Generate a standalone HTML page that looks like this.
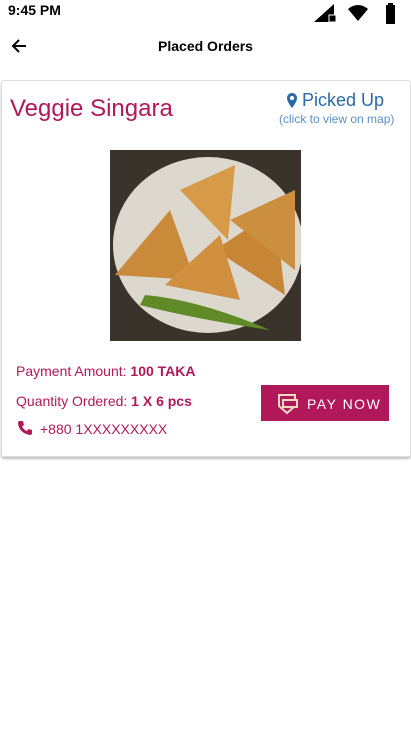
<!DOCTYPE html>
<html><head><style>
body{margin:0;width:411px;height:731px;background:#fff;font-family:"Liberation Sans",sans-serif;position:relative;overflow:hidden}
.a{position:absolute}
.card{left:1px;top:80px;width:408px;height:375px;border:1px solid #ddd;border-radius:3px;box-shadow:0 2px 2px rgba(0,0,0,.25)}
.m{color:#b0185a}
</style></head><body>
<div class="a" style="left:8px;top:2px;font-size:14px;font-weight:bold">9:45 PM</div>
<svg class="a" style="left:312px;top:2px" width="90" height="22">
<path d="M2 20 L22 2 V20Z" fill="#000"/><rect x="17" y="13" width="7" height="7" fill="#000" stroke="#fff"/>
<path d="M36 7 Q46 -1 56 7 L46 19Z" fill="#000"/>
<rect x="74" y="3" width="9" height="19" fill="#000"/><rect x="76" y="1" width="5" height="3" fill="#000"/>
</svg>
<svg class="a" style="left:10px;top:37px" width="18" height="18"><path d="M16 9H3M9 3L3 9L9 15" stroke="#000" stroke-width="2" fill="none"/></svg>
<div class="a" style="left:0;width:411px;top:38px;text-align:center;font-size:14px;font-weight:bold">Placed Orders</div>
<div class="a card"></div>
<div class="a m" style="left:10px;top:95px;font-size:24px">Veggie Singara</div>
<svg class="a" style="left:286px;top:92px" width="12" height="18"><path d="M6 1C3 1 1 3.5 1 6C1 10 6 16 6 16C6 16 11 10 11 6C11 3.5 9 1 6 1Z" fill="#2a6aa8"/><circle cx="6" cy="6" r="2" fill="#fff"/></svg>
<div class="a" style="left:302px;top:90px;font-size:18px;color:#2a6aa8">Picked Up</div>
<div class="a" style="left:279px;top:112px;font-size:12px;color:#5b8fc4">(click to view on map)</div>
<svg class="a" style="left:110px;top:150px" width="191" height="191">
<rect width="191" height="191" fill="#3a332c"/>
<ellipse cx="98" cy="95" rx="95" ry="88" fill="#ddd8ce"/>
<path d="M5 125 L60 60 L85 130 Z" fill="#c98a3a"/>
<path d="M70 40 L125 15 L118 90 Z" fill="#d69a48"/>
<path d="M105 100 L165 60 L175 145 Z" fill="#c78636"/>
<path d="M55 135 L110 85 L130 150 Z" fill="#d09040"/>
<path d="M120 70 L185 40 L185 120 Z" fill="#cc8f3f"/>
<path d="M35 145 Q90 150 160 180 Q90 170 30 155Z" fill="#5f8a25"/>
</svg>
<div class="a m" style="left:16px;top:363px;font-size:14px">Payment Amount: <b>100 TAKA</b></div>
<div class="a m" style="left:16px;top:393px;font-size:14px">Quantity Ordered: <b>1 X 6 pcs</b></div>
<svg class="a" style="left:17px;top:420px" width="16" height="16"><path d="M3 1L6 1L7 5L5 6.5Q7 10 10 11L11.5 9L15 10L15 13Q15 15 13 15Q2 13 1 3Q1 1 3 1Z" fill="#b0185a"/></svg>
<div class="a m" style="left:40px;top:421px;font-size:14px">+880 1XXXXXXXXX</div>
<div class="a" style="left:261px;top:385px;width:128px;height:36px;background:#b0185a"></div>
<svg class="a" style="left:275px;top:392px" width="26" height="24"><path d="M4 3H20V14L12 21L4 14Z" fill="none" stroke="#f3d8c0" stroke-width="2"/><rect x="8" y="8" width="14" height="7" fill="#b0185a" stroke="#f3d8c0" stroke-width="2"/></svg>
<div class="a" style="left:307px;top:396px;font-size:14px;color:#fff;letter-spacing:1.5px">PAY NOW</div>
</body></html>
